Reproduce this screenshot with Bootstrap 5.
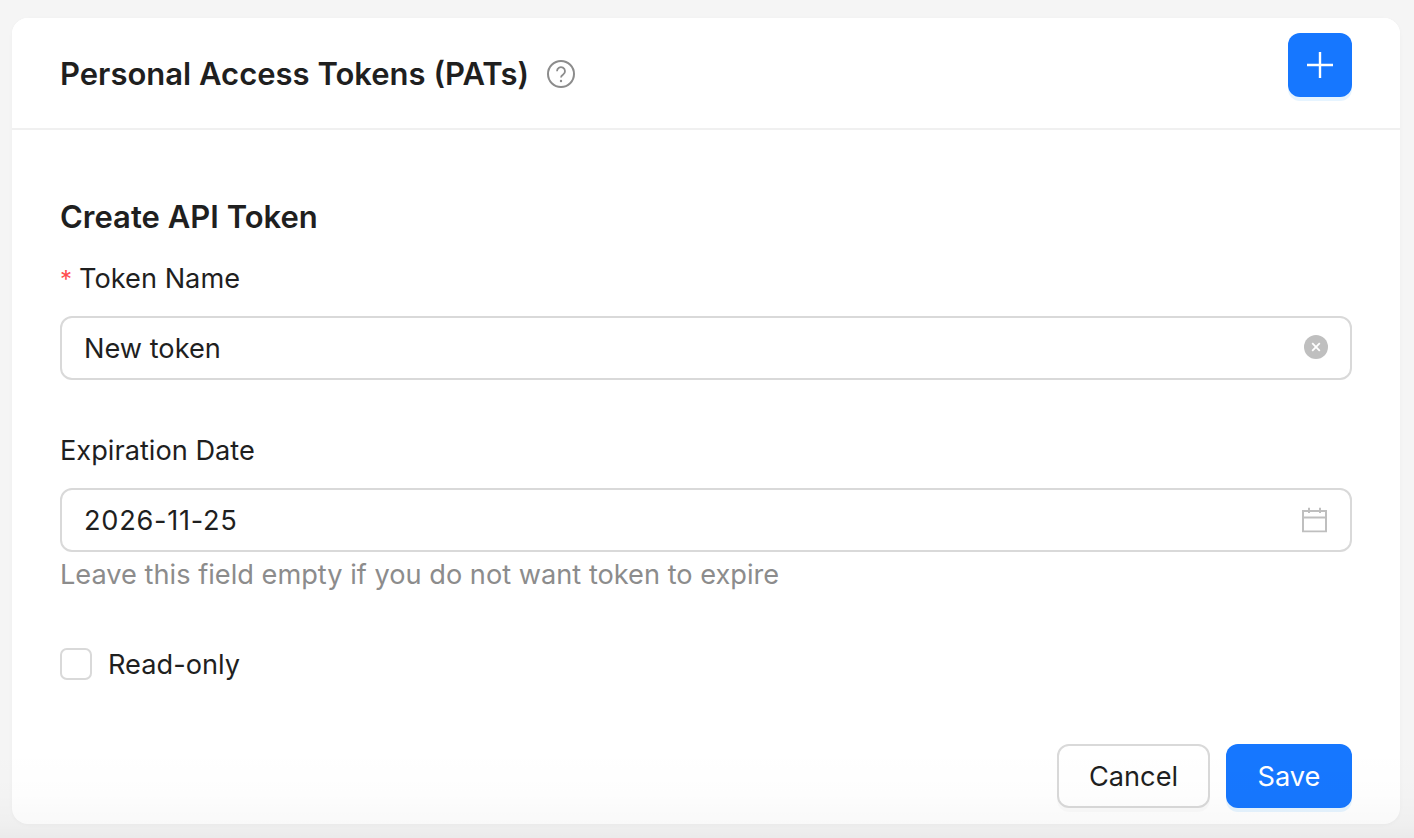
<!DOCTYPE html>
<html lang="en">
<head>
  <meta charset="UTF-8" />
  <title>Personal Access Tokens</title>
  <link href="https://cdn.jsdelivr.net/npm/bootstrap@5.3.0/dist/css/bootstrap.min.css" rel="stylesheet">
  <style>
    html, body { height: 100%; overflow: hidden; }
    body {
      font-family: Inter, "Liberation Sans", sans-serif;
      background-color: #f5f5f5;
      color: #1f1f1f;
      padding: 18px 14px 14px 12px;
      font-size: 27.2px;
      line-height: 36px;
    }
    .pat-card { height: 806px; border: 0; border-radius: 16px; box-shadow: 0 1px 4px rgba(0,0,0,.03); color: #1f1f1f; }
    .pat-header { height: 112px; padding: 15px 48px 0; background: #fff; border-bottom: 2px solid #f0f0f0; border-radius: 16px 16px 0 0 !important; }
    .pat-title { font-size: 31px; font-weight: 600; line-height: 40px; margin: 0; }
    .pat-title-row { margin-top: 21px; }
    .pat-help { margin-left: 18px; }
    .pat-add { width: 64px; height: 64px; border-radius: 12px; padding: 0; border: 0; background: #1677ff; box-shadow: 0 4px 0 #e6f4ff; }
    .pat-body { padding: 67px 48px 0; }
    .pat-form-title { font-size: 31px; font-weight: 600; line-height: 40px; margin: 0 0 24px; }
    .pat-label { line-height: 36px; margin: 0 0 19px; display: block; }
    .pat-label-tight { margin-bottom: 18px; }
    .pat-req { color: #ff4d4f; margin-right: 7px; font-size: 24px; }
    .pat-field { position: relative; height: 64px; }
    .pat-field-gap { margin-bottom: 53px; }
    .pat-field .form-control { height: 64px; border: 2px solid #d9d9d9; border-radius: 12px; padding: 0 22px; font-size: 27.2px; color: #1f1f1f; box-shadow: none; }
    .pat-field .pat-date { letter-spacing: .7px; }
    .pat-suffix { position: absolute; top: 50%; transform: translateY(-50%); display: block; }
    .pat-clear { right: 24px; margin-top: -1px; }
    .pat-calendar { right: 25px; }
    .pat-hint { color: #8c8c8c; line-height: 46px; }
    .pat-check-row { margin: 47px 0 61px; }
    .pat-check { width: 32px; height: 32px; border: 2px solid #d9d9d9; border-radius: 8px; margin: 0 16px 0 0; box-shadow: none; }
    .pat-check-label { padding-top: 2px; }
    .pat-footer { gap: 16px; }
    .pat-btn { height: 64px; border-radius: 12px; font-size: 27.2px; line-height: 1; padding: 2px 0 0; }
    .pat-cancel { width: 153px; background: #fff; border: 2px solid #d9d9d9; color: #1f1f1f; box-shadow: 0 4px 0 rgba(0,0,0,.02); }
    .pat-save { width: 126px; background: #1677ff; border: 0; color: #fff; box-shadow: 0 4px 0 #e6f4ff; }
    .pat-fade { position: absolute; left: 0; right: 0; bottom: 0; height: 90px; background: linear-gradient(to bottom, rgba(0,0,0,0), rgba(0,0,0,.008) 50%, rgba(0,0,0,.025) 84%, rgba(0,0,0,.045)); pointer-events: none; }
  </style>
</head>
<body>
  <div class="card pat-card">
    <div class="card-header pat-header d-flex align-items-start justify-content-between">
      <div class="d-flex align-items-center pat-title-row">
        <h1 class="pat-title">Personal Access Tokens (PATs)</h1>
        <svg class="pat-help" width="28" height="28" viewBox="0 0 28 28" fill="none" stroke="#8c8c8c" stroke-width="2">
          <circle cx="14" cy="14" r="13"/>
          <path d="M10 11.2a4 4 0 1 1 6.2 3.3c-1.4.9-2.2 1.6-2.2 3.1" stroke-width="1.8"/>
          <circle cx="14" cy="21" r="1.2" fill="#8c8c8c" stroke="none"/>
        </svg>
      </div>
      <button class="btn pat-add d-flex align-items-center justify-content-center" type="button" aria-label="Add">
        <svg width="26" height="26" viewBox="0 0 26 26" stroke="#fff" stroke-width="2.4"><path d="M13 0v26M0 13h26"/></svg>
      </button>
    </div>
    <div class="card-body pat-body">
      <h2 class="pat-form-title">Create API Token</h2>
      <form>
        <label class="pat-label pat-label-tight"><span class="pat-req">*</span>Token Name</label>
        <div class="pat-field pat-field-gap">
          <input class="form-control" type="text" value="New token" />
          <svg class="pat-suffix pat-clear" width="24" height="24" viewBox="0 0 24 24">
            <circle cx="12" cy="12" r="12" fill="#bfbfbf"/>
            <path d="M8.2 8.2l7.6 7.6M15.8 8.2l-7.6 7.6" stroke="#fff" stroke-width="1.8"/>
          </svg>
        </div>
        <label class="pat-label">Expiration Date</label>
        <div class="pat-field">
          <input class="form-control pat-date" type="text" value="2026-11-25" />
          <svg class="pat-suffix pat-calendar" width="25" height="25" viewBox="0 0 25 25" fill="none" stroke="#bfbfbf" stroke-width="2">
            <rect x="1" y="3.5" width="23" height="20.5"/>
            <path d="M1 10h23M7 0v5.5M18 0v5.5"/>
          </svg>
        </div>
        <div class="pat-hint">Leave this field empty if you do not want token to expire</div>
        <div class="d-flex align-items-center pat-check-row">
          <input class="form-check-input pat-check" type="checkbox" id="readOnly" />
          <label class="pat-check-label" for="readOnly">Read-only</label>
        </div>
        <div class="d-flex justify-content-end pat-footer">
          <button class="btn pat-btn pat-cancel" type="button">Cancel</button>
          <button class="btn pat-btn pat-save" type="button">Save</button>
        </div>
      </form>
    </div>
  </div>
  <div class="pat-fade"></div>
</body>
</html>
